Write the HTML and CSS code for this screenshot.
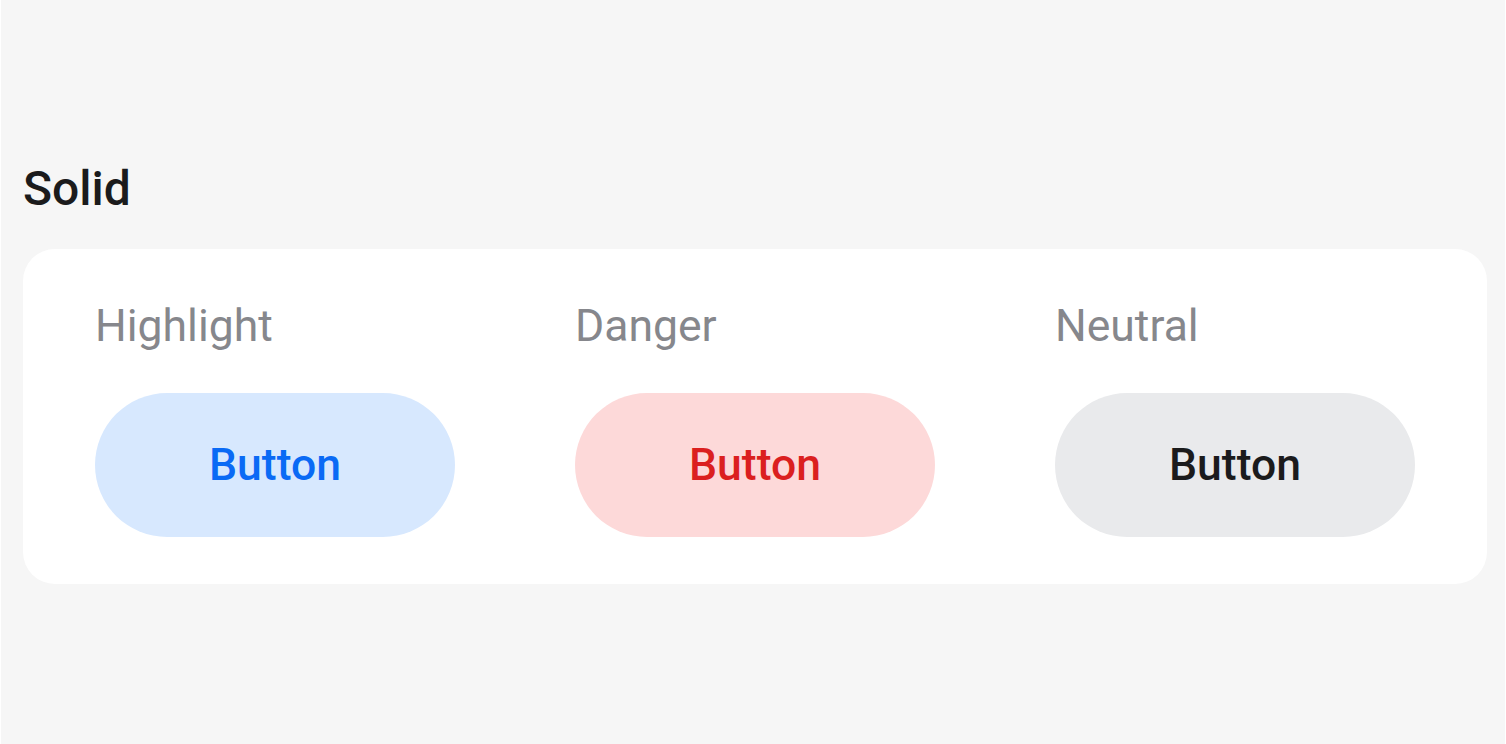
FILE: index.html
```html
<!DOCTYPE html>
<html lang="en">
<head>
<meta charset="utf-8">
<title>Solid buttons</title>
<link rel="stylesheet" href="styles.css">
</head>
<body>
<main class="page">
  <h2 class="section-title">Solid</h2>
  <section class="card">
    <div class="variant">
      <div class="variant-label">Highlight</div>
      <button class="btn btn-highlight">Button</button>
    </div>
    <div class="variant">
      <div class="variant-label">Danger</div>
      <button class="btn btn-danger">Button</button>
    </div>
    <div class="variant">
      <div class="variant-label">Neutral</div>
      <button class="btn btn-neutral">Button</button>
    </div>
  </section>
</main>
</body>
</html>
```

FILE: styles.css
```css
html {
  background: #ffffff;
}
body {
  margin: 0 1px;
  min-height: 744px;
  background: #f6f6f6;
  font-family: Roboto, "Liberation Sans", Arial, sans-serif;
}
.page {
  padding: 161px 18px 0 22px;
}
.section-title {
  margin: 0 0 32px 0;
  font-size: 48px;
  line-height: 56px;
  font-weight: 500;
  color: #1b1b1c;
}
.card {
  background: #ffffff;
  border-radius: 32px;
  padding: 48px 72px 47px 72px;
  display: grid;
  grid-template-columns: repeat(3, 360px);
  column-gap: 120px;
}
.variant {
  display: flex;
  flex-direction: column;
  gap: 38px;
}
.variant-label {
  font-size: 44.5px;
  line-height: 58px;
  color: #86878c;
}
.btn {
  width: 360px;
  height: 144px;
  border: none;
  border-radius: 72px;
  font-family: Roboto, "Liberation Sans", Arial, sans-serif;
  font-size: 44.5px;
  font-weight: 500;
  padding: 0;
  cursor: pointer;
}
.btn-highlight {
  background: #d7e8fe;
  color: #0a6af5;
}
.btn-danger {
  background: #fdd9d9;
  color: #db1f1f;
}
.btn-neutral {
  background: #e9eaec;
  color: #1b1b1c;
}
```
